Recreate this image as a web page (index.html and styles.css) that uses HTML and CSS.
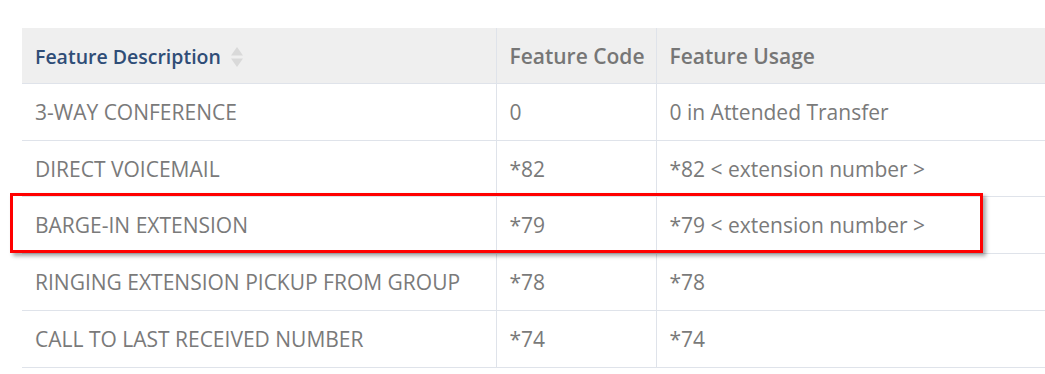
FILE: index.html
```html
<!DOCTYPE html>
<html>
<head>
<meta charset="utf-8">
<link rel="stylesheet" href="styles.css">
</head>
<body>
<div class="wrap">
  <table class="codes">
    <colgroup>
      <col class="c1"><col class="c2"><col class="c3">
    </colgroup>
    <thead>
      <tr>
        <th class="sorted"><span>Feature Description</span>
          <svg class="sort" width="12" height="20" viewBox="0 0 12 20"><path d="M6 0 L12 8.5 H0 Z" fill="#d9d9d9"/><path d="M6 20 L12 11.5 H0 Z" fill="#d9d9d9"/></svg>
        </th>
        <th>Feature Code</th>
        <th>Feature Usage</th>
      </tr>
    </thead>
    <tbody>
      <tr><td>3-WAY CONFERENCE</td><td>0</td><td>0 in Attended Transfer</td></tr>
      <tr><td>DIRECT VOICEMAIL</td><td>*82</td><td>*82 &lt; extension number &gt;</td></tr>
      <tr><td>BARGE-IN EXTENSION</td><td>*79</td><td>*79 &lt; extension number &gt;</td></tr>
      <tr><td>RINGING EXTENSION PICKUP FROM GROUP</td><td>*78</td><td>*78</td></tr>
      <tr><td>CALL TO LAST RECEIVED NUMBER</td><td>*74</td><td>*74</td></tr>
    </tbody>
  </table>
  <div class="highlight"></div>
</div>
</body>
</html>
```

FILE: styles.css
```css
html, body {
  margin: 0;
  padding: 0;
  background: #ffffff;
  overflow: hidden;
}
body {
  font-family: "Open Sans", "Noto Sans", sans-serif;
}
.wrap {
  position: relative;
  padding: 28px 0 0 22px;
}
.codes {
  border-collapse: collapse;
  table-layout: fixed;
  width: 1040px;
  font-size: 21px;
  color: #7a7a7a;
}
.c1 { width: 474px; }
.c2 { width: 160px; }
.codes th,
.codes td {
  text-align: left;
  padding: 15px 13px 13px 13px;
  line-height: 27.8px;
  border-bottom: 1px solid #dfe3ea;
  border-right: 1px solid #dfe3ea;
  white-space: nowrap;
}
.codes th {
  background: #efefef;
  font-size: 21px;
  font-weight: 600;
  color: #767676;
  padding-top: 15px;
  padding-bottom: 12px;
}
.codes th.sorted {
  color: #2f4d77;
  font-size: 19.5px;
}
.codes th.sorted .sort {
  vertical-align: -3px;
  margin-left: 5px;
}
.codes td {
  font-weight: 400;
}
.highlight {
  position: absolute;
  left: 10px;
  top: 193px;
  width: 967px;
  height: 54px;
  border: 3px solid #ff0000;
  box-shadow: 3px 3px 4px rgba(0, 0, 0, 0.35);
}
```
